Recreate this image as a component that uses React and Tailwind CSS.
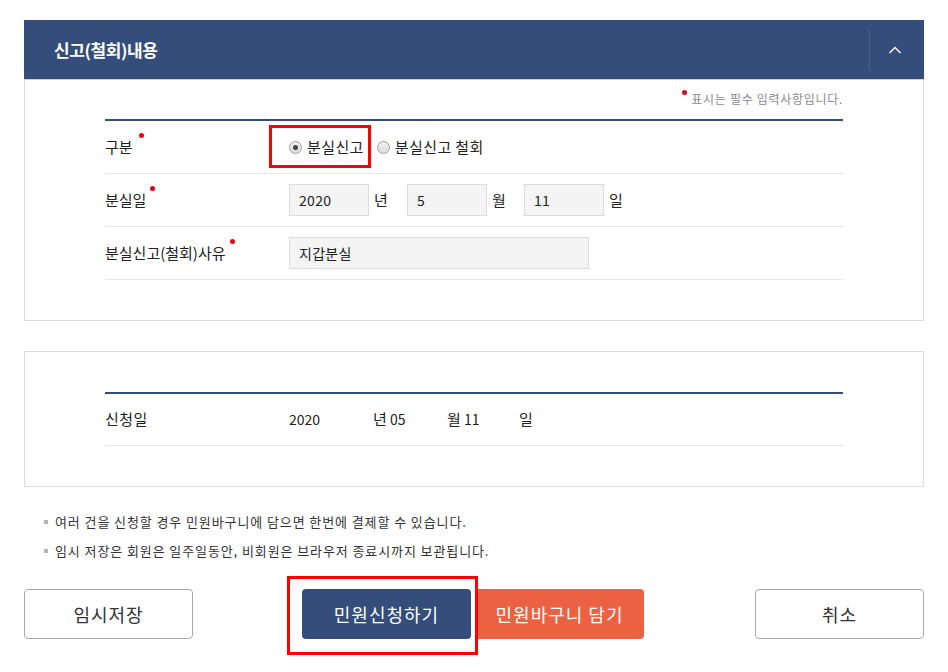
import React from "react";

const font = { fontFamily: '"Noto Sans CJK KR", "Noto Sans", sans-serif' };

function Dot({ className = "" }) {
  return <span className={"absolute w-[5px] h-[5px] rounded-full bg-[#e60012] " + className} />;
}

function Radio({ checked }) {
  return (
    <span className="w-[13px] h-[13px] rounded-full border border-[#a0a0a0] bg-gradient-to-b from-[#f0f0f0] to-[#dcdcdc] flex items-center justify-center">
      {checked && <span className="w-[5px] h-[5px] rounded-full bg-[#444]" />}
    </span>
  );
}

function Input({ value, w = "w-[80px]" }) {
  return (
    <div className={`${w} h-[32px] bg-[#f4f4f4] border border-[#dcdcdc] flex items-center pl-[9px] text-[14px] text-[#222] tracking-[0.3px]`}>
      {value}
    </div>
  );
}

export default function App() {
  return (
    <div style={font} className="w-[948px] h-[672px] bg-white px-[24px] pt-[20px] text-[#222]">
      {/* header */}
      <div className="h-[59px] bg-[#344d7a] flex items-center justify-between">
        <div className="pl-[30px] text-white font-bold text-[17px] tracking-[-0.4px]">신고(철회)내용</div>
        <div className="h-[40px] w-[55px] border-l border-[#4a6290] flex items-center justify-center">
          <svg width="14" height="10" viewBox="0 0 14 10" fill="none" className="-ml-[4px] mt-[1px]">
            <path d="M1.5 8 L7 2.5 L12.5 8" stroke="white" strokeWidth="1.4" />
          </svg>
        </div>
      </div>
      {/* box 1 */}
      <div className="border border-t-0 border-[#dcdcdc] px-[80px] pb-[40px]">
        <div className="border-t border-[#c9d1dd] -mx-[80px]" />
        <div className="h-[39px] flex justify-end pt-[10px]">
          <div className="relative text-[12px] text-[#8a8a8a] leading-[18px] pl-[9px] tracking-[0.7px]">
            <Dot className="left-0 top-0" />
            표시는 필수 입력사항입니다.
          </div>
        </div>
        <div className="border-t-2 border-[#344d7a]">
          {/* row 1 */}
          <div className="h-[53px] border-b border-[#e8e8e8] flex items-center">
            <div className="w-[184px] text-[15px] relative">
              <span className="relative">
                구분
                <Dot className="-right-[11px] -top-[3px]" />
              </span>
            </div>
            <div className="flex items-center text-[15px] tracking-[0.4px]">
              <div className="relative flex items-center">
                <span className="absolute -left-[20px] -top-[11px] w-[102px] h-[43px] border-[3px] border-[#ff0000]" />
                <Radio checked />
                <span className="ml-[5px]">분실신고</span>
              </div>
              <div className="flex items-center ml-[13px]">
                <Radio />
                <span className="ml-[5px]">분실신고 철회</span>
              </div>
            </div>
          </div>
          {/* row 2 */}
          <div className="h-[53px] border-b border-[#e8e8e8] flex items-center">
            <div className="w-[184px] text-[15px]">
              <span className="relative">
                분실일
                <Dot className="-right-[9px] -top-[3px]" />
              </span>
            </div>
            <div className="flex items-center text-[15px]">
              <Input value="2020" />
              <span className="ml-[5px] w-[33px]">년</span>
              <Input value="5" />
              <span className="ml-[5px] w-[32px]">월</span>
              <Input value="11" />
              <span className="ml-[5px]">일</span>
            </div>
          </div>
          {/* row 3 */}
          <div className="h-[53px] border-b border-[#e8e8e8] flex items-center">
            <div className="w-[184px] text-[15px]">
              <span className="relative">
                분실신고(철회)사유
                <Dot className="-right-[9px] -top-[3px]" />
              </span>
            </div>
            <Input value="지갑분실" w="w-[300px]" />
          </div>
        </div>
      </div>
      {/* box 2 */}
      <div className="mt-[30px] border border-[#dcdcdc] px-[80px] pt-[40px] pb-[40px]">
        <div className="border-t-2 border-[#344d7a]">
          <div className="h-[52px] border-b border-[#e8e8e8] flex items-center text-[14px]">
            <div className="w-[184px] text-[15px] tracking-[0.5px]">신청일</div>
            <span className="w-[84px]">2020</span>
            <span className="w-[74px]">
              <span className="text-[15px]">년</span> 05
            </span>
            <span className="w-[72px]">
              <span className="text-[15px]">월</span> 11
            </span>
            <span className="text-[15px]">일</span>
          </div>
        </div>
      </div>
      {/* notes */}
      <div className="mt-[25px] pl-[20px] text-[13px] text-[#333] tracking-[0.9px]">
        <div className="flex items-center h-[20px]">
          <span className="w-[4px] h-[4px] bg-[#b5b5b5] mr-[7px]" />
          여러 건을 신청할 경우 민원바구니에 담으면 한번에 결제할 수 있습니다.
        </div>
        <div className="flex items-center h-[20px] mt-[9px]">
          <span className="w-[4px] h-[4px] bg-[#b5b5b5] mr-[7px]" />
          임시 저장은 회원은 일주일동안, 비회원은 브라우저 종료시까지 보관됩니다.
        </div>
      </div>
      {/* buttons */}
      <div className="mt-[28px] flex items-center justify-between text-[18px] tracking-[1px]">
        <button className="w-[169px] h-[50px] border border-[#a9a9a9] rounded-[4px] bg-white text-[#333]">임시저장</button>
        <div className="flex items-center gap-[4px] ml-[-2px]">
          <div className="relative">
            <span className="absolute -left-[15px] -top-[13px] w-[191px] h-[79px] border-[3px] border-[#ff0000] pointer-events-none" />
            <button className="w-[169px] h-[50px] rounded-[4px] bg-[#344d7a] text-white">민원신청하기</button>
          </div>
          <button className="w-[169px] h-[50px] rounded-[4px] bg-[#eb6142] text-white">민원바구니 담기</button>
        </div>
        <button className="w-[169px] h-[50px] border border-[#a9a9a9] rounded-[4px] bg-white text-[#333]">취소</button>
      </div>
    </div>
  );
}
